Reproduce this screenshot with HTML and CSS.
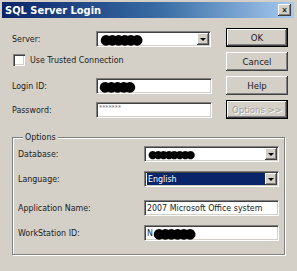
FILE: index.html
```html
<!DOCTYPE html>
<html lang="en">
<head>
  <meta charset="UTF-8">
  <meta name="viewport" content="width=device-width, initial-scale=1.0">
  <title>SQL Server Login</title>
  <link rel="stylesheet" href="styles.css">
</head>
<body>
  <div class="window">
    <div class="title-bar">
      <span class="title">SQL Server Login</span>
      <span class="close-btn">&#x2715;</span>
    </div>

    <div class="dialog">
      <div class="top">
        <div class="fields">
          <div class="row row-server">
            <span class="label">Server:</span>
            <div class="combo combo-server">
              <span class="value"><span class="blot">&#9679;&#9679;&#9679;&#9679;&#9679;&#9679;</span></span>
              <span class="drop"><span class="arrow"></span></span>
            </div>
          </div>
          <div class="row row-check">
            <span class="checkbox"></span>
            <span class="check-text">Use Trusted Connection</span>
          </div>
          <div class="row row-login">
            <span class="label">Login ID:</span>
            <div class="input input-top"><span class="blot">&#9679;&#9679;&#9679;&#9679;&#9679;</span></div>
          </div>
          <div class="row row-pass">
            <span class="label">Password:</span>
            <div class="input input-top"><span class="stars">*******</span></div>
          </div>
        </div>

        <div class="buttons">
          <button class="btn btn-default">OK</button>
          <button class="btn">Cancel</button>
          <button class="btn">Help</button>
          <button class="btn btn-default" disabled>Options &gt;&gt;</button>
        </div>
      </div>

      <fieldset class="options">
        <legend>Options</legend>
        <div class="orow orow-db">
          <span class="label">Database:</span>
          <div class="combo combo-opt">
            <span class="value"><span class="blot blot-small">&#9679;&#9679;&#9679;&#9679;&#9679;&#9679;&#9679;&#9679;</span></span>
            <span class="drop"><span class="arrow"></span></span>
          </div>
        </div>
        <div class="orow orow-lang">
          <span class="label">Language:</span>
          <div class="combo combo-opt">
            <span class="value selected">English</span>
            <span class="drop"><span class="arrow"></span></span>
          </div>
        </div>
        <div class="orow orow-app">
          <span class="label">Application Name:</span>
          <div class="input input-opt">2007 Microsoft Office system</div>
        </div>
        <div class="orow orow-ws">
          <span class="label">WorkStation ID:</span>
          <div class="input input-opt">N<span class="blot">&#9679;&#9679;&#9679;&#9679;&#9679;&#9679;</span></div>
        </div>
      </fieldset>
    </div>
  </div>
</body>
</html>
```

FILE: styles.css
```css
/* Classic Windows dialog look */
* {
  margin: 0;
  padding: 0;
  box-sizing: border-box;
}

body {
  background: #d4d0c8;
  font-family: "DejaVu Sans Condensed", "Liberation Sans", sans-serif;
  font-size: 8.8px;
  color: #1a1a1a;
}

.window {
  width: 297px;
  height: 271px;
  padding: 2px 3px 0 2px;
  background: #d4d0c8;
}

/* Title bar */
.title-bar {
  height: 16px;
  display: flex;
  align-items: center;
  justify-content: space-between;
  padding: 0 3px 0 3px;
  background: linear-gradient(90deg, #0a246a, #3a6ea5 55%, #a6caf0);
}

.title {
  color: #fff;
  font-weight: bold;
  font-size: 11px;
}

.close-btn {
  width: 13px;
  height: 12px;
  display: flex;
  align-items: center;
  justify-content: center;
  background: #d4d0c8;
  font-size: 8px;
  font-weight: bold;
  color: #000;
  box-shadow: inset -1px -1px 0 #404040, inset 1px 1px 0 #fff, inset -2px -2px 0 #808080;
}

/* Upper part */
.top {
  display: flex;
  justify-content: space-between;
  padding: 0 6px 0 10px;
}

.fields {
  display: flex;
  flex-direction: column;
  width: 210px;
}

.row {
  display: flex;
  align-items: center;
  height: 16px;
}

.row .label {
  width: 84px;
}

.row-server { margin-top: 13px; }
.row-check { margin-top: 7px; height: 12px; }
.row-login { margin-top: 12px; }
.row-pass { margin-top: 8px; }

.checkbox {
  width: 12px;
  height: 12px;
  margin: 0 5px 0 1px;
  background: #fff;
  box-shadow: inset 1px 1px 0 #808080, inset 2px 2px 0 #404040, inset -1px -1px 0 #fff, inset -2px -2px 0 #d4d0c8;
}

/* Sunken fields */
.input,
.combo {
  height: 16px;
  background: #fff;
  border-top: 1px solid #808080;
  border-left: 1px solid #808080;
  border-right: 1px solid #fff;
  border-bottom: 1px solid #fff;
  box-shadow: inset 1px 1px 0 #404040, inset -1px -1px 0 #d4d0c8;
  display: flex;
  align-items: center;
  padding-left: 2px;
  color: #1a1a1a;
  white-space: nowrap;
  overflow: hidden;
}

.input-top { width: 116px; }
.combo-server { width: 115px; }

.combo {
  padding: 0 1px 0 2px;
}

.combo .value {
  flex: 1;
  height: 12px;
  display: flex;
  align-items: center;
  padding-left: 1px;
}

.combo .value.selected {
  background: #0a246a;
  color: #fff;
}

.drop {
  width: 12px;
  height: 12px;
  background: #d4d0c8;
  display: flex;
  align-items: center;
  justify-content: center;
  box-shadow: inset -1px -1px 0 #404040, inset 1px 1px 0 #fff, inset -2px -2px 0 #808080;
}

.arrow {
  width: 0;
  height: 0;
  border-left: 3px solid transparent;
  border-right: 3px solid transparent;
  border-top: 3px solid #000;
}

/* Scribbled-over values */
.blot {
  color: #000;
  font-family: "DejaVu Sans", sans-serif;
  font-size: 14px;
  letter-spacing: -6px;
  line-height: 11px;
  filter: blur(0.5px);
}

.blot-small {
  font-size: 11px;
  letter-spacing: -4.2px;
}

.stars {
  font-size: 7px;
  color: #777;
  align-self: flex-start;
  margin-top: 1px;
}

/* Buttons */
.buttons {
  display: flex;
  flex-direction: column;
  gap: 5px;
  padding-top: 10px;
}

.btn {
  width: 62px;
  height: 19px;
  font: inherit;
  font-size: 9.5px;
  color: #1a1a1a;
  background: #d4d0c8;
  border: none;
  box-shadow: inset -1px -1px 0 #404040, inset 1px 1px 0 #fff, inset -2px -2px 0 #808080;
}

.btn-default {
  border: 1px solid #000;
}

.btn:disabled {
  color: #a09e98;
  text-shadow: 1px 1px 0 #fff;
}

/* Options group box */
.options {
  margin: 12px 0 0 10px;
  width: 273px;
  height: 124px;
  border: 1px solid #808080;
  box-shadow: inset 1px 1px 0 #fff, 1px 1px 0 #fff;
  padding: 0 5px 0 5px;
}

.options legend {
  margin-left: 5px;
  padding: 0 2px;
  line-height: 12px;
  background: #d4d0c8;
}

.orow {
  display: flex;
  align-items: center;
  height: 16px;
}

.orow .label {
  width: 126px;
}

.orow-db { margin-top: 3px; }
.orow-lang { margin-top: 9px; }
.orow-app { margin-top: 13px; }
.orow-ws { margin-top: 9px; }

.combo-opt,
.input-opt {
  width: 135px;
}
```
